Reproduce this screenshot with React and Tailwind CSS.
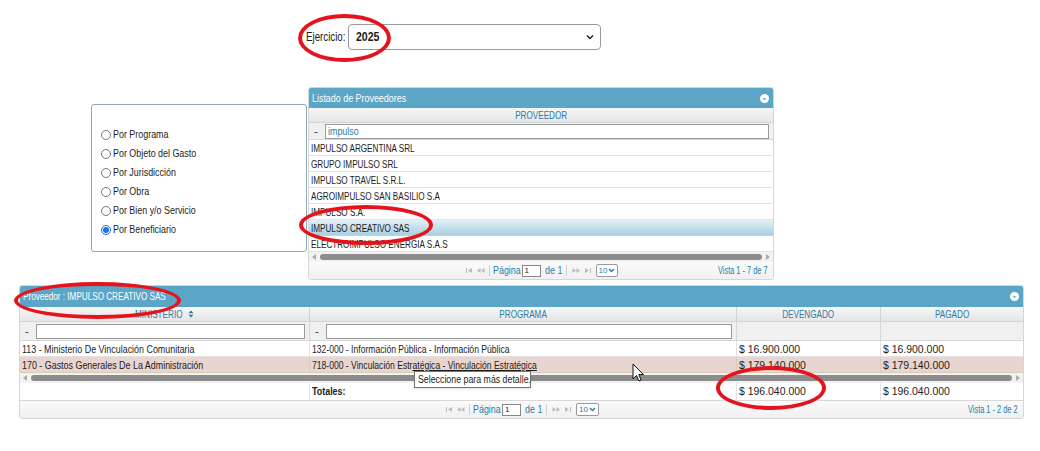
import React from 'react';

const font = "font-['Liberation_Sans',Arial,sans-serif]";

const proveedores = [
    'IMPULSO ARGENTINA SRL',
    'GRUPO IMPULSO SRL',
    'IMPULSO TRAVEL S.R.L.',
    'AGROIMPULSO SAN BASILIO S.A',
    'IMPULSO S.A.',
    'IMPULSO CREATIVO SAS',
    'ELECTROIMPULSO ENERGIA S.A.S',
];

const opciones = [
    'Por Programa',
    'Por Objeto del Gasto',
    'Por Jurisdicción',
    'Por Obra',
    'Por Bien y/o Servicio',
    'Por Beneficiario',
];

const squeeze = {
    caps: 'scale-x-[0.74]',
    text: 'scale-x-[0.81]',
    prog: 'scale-x-[0.78]',
    num: 'scale-x-[0.95]',
    tip: 'scale-x-[0.88]',
};

const Txt = ({ s = 'text', center = false, children }) => (
    <span className={`inline-block whitespace-nowrap ${center ? 'origin-center' : 'origin-left'} ${squeeze[s]}`}>
        {children}
    </span>
);

// small white circle with caret, top right of every grid caption
const CollapseIcon = () => (
    <svg width="9" height="9" viewBox="0 0 10 10">
        <circle cx="5" cy="5" r="5" fill="#fff" />
        <path d="M2.8 6 L5 3.8 L7.2 6 Z" fill="#5ba5c7" />
    </svg>
);

const NavIcon = ({ dir = 'left', bar = false }) => (
    <svg width="9" height="7" viewBox="0 0 9 7" className="mx-[1px]">
        {dir === 'left' ? (
            bar ? (
                <>
                    <rect x="1" y="1" width="1" height="5" fill="#bbb" />
                    <path d="M7 1 L3 3.5 L7 6 Z" fill="#bbb" />
                </>
            ) : (
                <>
                    <path d="M4.5 1 L1 3.5 L4.5 6 Z" fill="#bbb" />
                    <path d="M8.5 1 L5 3.5 L8.5 6 Z" fill="#bbb" />
                </>
            )
        ) : bar ? (
            <>
                <path d="M2 1 L6 3.5 L2 6 Z" fill="#bbb" />
                <rect x="7" y="1" width="1" height="5" fill="#bbb" />
            </>
        ) : (
            <>
                <path d="M0.5 1 L4 3.5 L0.5 6 Z" fill="#bbb" />
                <path d="M4.5 1 L8 3.5 L4.5 6 Z" fill="#bbb" />
            </>
        )}
    </svg>
);

const Pager = ({ vista }) => (
    <div className="grid grid-cols-[1fr_auto_1fr] items-center h-[17px] bg-gradient-to-b from-[#fafafa] to-[#f0f0f0] text-[11px]">
        <div />
        <div className="flex items-center text-[#2b7ca6]">
            <NavIcon dir="left" bar />
            <NavIcon dir="left" />
            <span className="w-px h-[11px] bg-[#d0d0d0] mx-[3px]" />
            <span className="w-[28px]"><Txt>Página</Txt></span>
            <span className="ml-[1px] w-[19px] h-[12px] border border-[#888] bg-white text-[8px] leading-[10px] pl-[2px] text-[#222]">1</span>
            <span className="ml-[4px] w-[17px]"><Txt>de 1</Txt></span>
            <span className="w-px h-[11px] bg-[#d0d0d0] mx-[4px]" />
            <NavIcon dir="right" />
            <NavIcon dir="right" bar />
            <span className="ml-[3px] flex items-center gap-[1px] h-[13px] px-[2px] border border-[#999] rounded-[2px] bg-white text-[8px] text-[#2b7ca6]">
                10
                <svg width="7" height="5" viewBox="0 0 7 5">
                    <path d="M1 1 L3.5 3.5 L6 1" stroke="#2b7ca6" strokeWidth="1.4" fill="none" />
                </svg>
            </span>
        </div>
        <div className="flex justify-end pr-[2px] text-[10px] text-[#2b7ca6]">
            <span className="w-[53px]"><Txt s="caps">{vista}</Txt></span>
        </div>
    </div>
);

const ScrollBar = () => (
    <div className="flex items-center h-[10px] px-[3px] gap-[3px] bg-[#f2f2f2]">
        <svg width="5" height="6" viewBox="0 0 5 6"><path d="M4 0 L0 3 L4 6 Z" fill="#aaa" /></svg>
        <div className="flex-1 h-[6px] rounded-full bg-[#8c8c8c]" />
        <svg width="5" height="6" viewBox="0 0 5 6"><path d="M1 0 L5 3 L1 6 Z" fill="#aaa" /></svg>
    </div>
);

const FilterInput = ({ value = '' }) => (
    <div className="flex items-center h-full pl-[5px] pr-[4px] gap-[7px]">
        <span className="text-[11px] text-[#333]">-</span>
        <div className="flex-1 h-[15px] border border-[#9a9a9a] bg-white text-[11px] leading-[13px] pl-[2px] text-[#2b7ca6]">
            <Txt>{value}</Txt>
        </div>
    </div>
);

const Cell = ({ s = 'text', last = false, hover = false, children }) => (
    <div
        className={`h-[16px] leading-[16px] pl-[2px] text-[11px] overflow-hidden border-b ${last ? '' : 'border-r'} ${
            hover ? 'border-[#dccbb4]' : 'border-[#e2e2e2]'
        }`}
    >
        <Txt s={s}>{children}</Txt>
    </div>
);

const HeadCell = ({ last = false, children }) => (
    <div className={`h-[15px] flex items-center justify-center gap-[3px] text-[11px] text-[#2b7ca6] bg-gradient-to-b from-[#f6f6f6] to-[#e6e6e6] border-b border-[#d4d4d4] ${last ? '' : 'border-r'}`}>
        {children}
    </div>
);

const FilterCell = ({ input = false, last = false }) => (
    <div className={`h-[19px] bg-[#f0f0f0] border-b border-[#d8d8d8] ${last ? '' : 'border-r'}`}>
        {input && <FilterInput />}
    </div>
);

const Ellipse = ({ className }) => (
    <div className={`absolute rounded-[50%] border-[4px] border-[#e5141c] pointer-events-none ${className}`} />
);

const Cursor = () => (
    <svg width="14" height="20" viewBox="0 0 14 20" className="absolute left-[632px] top-[363px]">
        <path d="M1 1 L1 16 L4.5 12.5 L7 18 L9.2 17 L6.8 11.6 L11.5 11.6 Z" fill="#fff" stroke="#111" strokeWidth="1" strokeLinejoin="round" />
    </svg>
);

export default function App() {
    return (
        <div className={`relative w-[1040px] h-[451px] bg-white overflow-hidden text-[#1c1c1c] ${font}`}>
            {/* Ejercicio selector */}
            <div className="flex items-center pt-[24px] pl-[306px]">
                <span className="w-[42px] text-[12px]"><Txt>Ejercicio:</Txt></span>
                <div className="flex items-center justify-between w-[253px] h-[26px] border border-[#9a9a9a] rounded-[4px] pl-[7px] pr-[6px]">
                    <span className="text-[12px] font-bold"><Txt s="tip">2025</Txt></span>
                    <svg width="8" height="6" viewBox="0 0 8 6">
                        <path d="M1 1.5 L4 4.5 L7 1.5" stroke="#222" strokeWidth="1.5" fill="none" />
                    </svg>
                </div>
            </div>

            <div className="flex items-start mt-[37px] pl-[91px]">
                {/* Report type options */}
                <div className="mt-[17px] w-[216px] h-[148px] border border-[#8ea8bb] rounded-[3px] pt-[20px] pl-[9px] text-[11px]">
                    {opciones.map((o, i) => (
                        <div key={o} className="flex items-center h-[19px] gap-[2px]">
                            <span className={`w-[10px] h-[10px] rounded-full border flex items-center justify-center ${i === 5 ? 'border-[#1a73e8]' : 'border-[#777]'}`}>
                                {i === 5 && <span className="w-[6px] h-[6px] rounded-full bg-[#1a73e8]" />}
                            </span>
                            <Txt>{o}</Txt>
                        </div>
                    ))}
                </div>

                {/* Listado de Proveedores */}
                <div className="ml-px w-[466px] border border-[#d6d6d6] rounded-[3px] overflow-hidden">
                    <div className="flex items-center justify-between h-[20px] bg-[#5ba5c7] px-[3px] pr-[4px] text-white text-[11px]">
                        <Txt>Listado de Proveedores</Txt>
                        <CollapseIcon />
                    </div>
                    <div className="h-[15px] bg-gradient-to-b from-[#f6f6f6] to-[#e6e6e6] text-center text-[11px] leading-[15px] text-[#2b7ca6] border-b border-[#d4d4d4]">
                        <Txt s="caps" center>PROVEEDOR</Txt>
                    </div>
                    <div className="h-[17px] bg-[#f0f0f0] border-b border-[#d8d8d8]">
                        <FilterInput value="impulso" />
                    </div>
                    {proveedores.map((p, i) => (
                        <div
                            key={p}
                            className={`h-[16px] pl-[2px] text-[11px] leading-[16px] border-b ${
                                i === 5
                                    ? 'bg-gradient-to-b from-[#e3f0f6] to-[#a9cfe1] border-[#d6d3a8]'
                                    : 'bg-white border-[#e2e2e2]'
                            }`}
                        >
                            <Txt s="caps">{p}</Txt>
                        </div>
                    ))}
                    <ScrollBar />
                    <Pager vista="Vista 1 - 7 de 7" />
                </div>
            </div>

            {/* Detalle por proveedor */}
            <div className="mt-[5px] ml-[19px] w-[1005px] border border-[#d6d6d6] rounded-[3px] overflow-hidden">
                <div className="flex items-center justify-between h-[21px] bg-[#5ba5c7] px-[3px] pr-[4px] text-white text-[11px]">
                    <Txt s="caps">Proveedor : IMPULSO CREATIVO SAS</Txt>
                    <CollapseIcon />
                </div>

                <div className="grid grid-cols-[290px_427px_144px_1fr] bg-white">
                    <HeadCell>
                        <span className="w-[50px]"><Txt s="caps">MINISTERIO</Txt></span>
                        <svg width="6" height="8" viewBox="0 0 6 8">
                            <path d="M0.5 3.3 L3 0.5 L5.5 3.3 Z M0.5 4.7 L3 7.5 L5.5 4.7 Z" fill="#2b7ca6" />
                        </svg>
                    </HeadCell>
                    <HeadCell><Txt s="caps" center>PROGRAMA</Txt></HeadCell>
                    <HeadCell><Txt s="caps" center>DEVENGADO</Txt></HeadCell>
                    <HeadCell last><Txt s="caps" center>PAGADO</Txt></HeadCell>

                    <FilterCell input />
                    <FilterCell input />
                    <FilterCell />
                    <FilterCell last />

                    <Cell>113 - Ministerio De Vinculación Comunitaria</Cell>
                    <Cell s="prog">132-000 - Información Pública - Información Pública</Cell>
                    <Cell s="num">$ 16.900.000</Cell>
                    <Cell s="num" last>$ 16.900.000</Cell>
                </div>

                {/* hovered row */}
                <div className="grid grid-cols-[290px_427px_144px_1fr] bg-[#e9d5cf]">
                    <Cell hover>170 - Gastos Generales De La Administración</Cell>
                    <Cell hover s="prog">
                        718-000 - Vinculación Estr<span className="underline">atégica - Vinculación Estratégica</span>
                    </Cell>
                    <Cell hover s="num">$ 179.140.000</Cell>
                    <Cell hover s="num" last>$ 179.140.000</Cell>
                </div>

                <ScrollBar />

                {/* totals */}
                <div className="grid grid-cols-[290px_427px_144px_1fr] h-[18px] text-[11px] leading-[17px] bg-white border-b border-[#d8d8d8]">
                    <div className="border-r border-[#e2e2e2]" />
                    <div className="pl-[2px] font-bold border-r border-[#e2e2e2]"><Txt>Totales:</Txt></div>
                    <div className="pl-[2px] border-r border-[#e2e2e2]"><Txt s="num">$ 196.040.000</Txt></div>
                    <div className="pl-[2px]"><Txt s="num">$ 196.040.000</Txt></div>
                </div>

                <Pager vista="Vista 1 - 2 de 2" />
            </div>

            {/* hover tooltip and pointer */}
            <div className="absolute left-[414px] top-[371px] w-[117px] h-[17px] pl-[3px] border border-[#767676] bg-white text-[10px] leading-[15px] shadow-sm">
                <Txt s="tip">Seleccione para más detalle.</Txt>
            </div>
            <Cursor />

            {/* highlight marks */}
            <Ellipse className="left-[298px] top-[14px] w-[93px] h-[48px]" />
            <Ellipse className="left-[299px] top-[205px] w-[134px] h-[40px]" />
            <Ellipse className="left-[14px] top-[282px] w-[167px] h-[37px]" />
            <Ellipse className="left-[716px] top-[366px] w-[110px] h-[44px]" />
        </div>
    );
}
